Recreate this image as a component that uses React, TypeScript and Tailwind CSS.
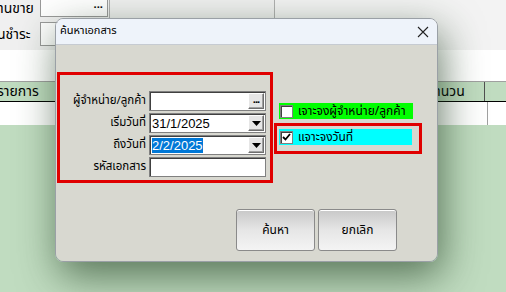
import React from "react";

const font = { fontFamily: 'Tahoma, "Noto Sans Thai", "Leelawadee UI", "Liberation Sans", sans-serif' };

function Btn3D({ children }: { children: React.ReactNode }) {
  return (
    <div className="w-[16px] h-[16px] flex items-center justify-center bg-[#e6e6e6] border border-t-white border-l-white border-r-[#6e6e6e] border-b-[#6e6e6e] shadow-[inset_-1px_-1px_0_#a0a0a0]">
      {children}
    </div>
  );
}

function Field({ children, btn }: { children?: React.ReactNode; btn?: "dots" | "arrow" }) {
  return (
    <div className="w-[117px] h-[20px] bg-white border border-[#808080] shadow-[inset_1px_1px_0_#404040] flex items-center pl-[2px] pr-[1px]">
      <div className="flex-1 text-[13px] leading-none text-black" style={{ fontFamily: '"Liberation Sans", Arial, sans-serif' }}>{children}</div>
      {btn === "dots" && (
        <Btn3D>
          <span className="text-[11px] leading-none font-bold tracking-[-1px] -mt-[4px]">...</span>
        </Btn3D>
      )}
      {btn === "arrow" && (
        <Btn3D>
          <svg width="9" height="5" viewBox="0 0 9 5"><path d="M0 0h9L4.5 5z" fill="#000" /></svg>
        </Btn3D>
      )}
    </div>
  );
}

export default function App() {
  return (
    <div className="relative w-[506px] h-[292px] overflow-hidden bg-[#c0dcc0] text-black" style={font}>
      {/* Background app */}
      <div className="flex flex-col">
        <div className="bg-[#f0f0f0] h-[50px] flex">
          <div className="w-[275px] flex flex-col">
            <div className="flex h-[18px]">
              <div className="w-[43px] text-[14px] leading-[17px] pl-[1px] -ml-[3px] whitespace-nowrap">านขาย</div>
              <div className="w-[68px] h-[17px] bg-white border border-[#9a9a9a] border-t-0 flex items-start justify-end pr-[4px]">
                <span className="text-[11px] leading-[10px] font-bold">...</span>
              </div>
              <div className="flex-1 h-[18px] border-l border-r border-[#b0b0b0] ml-[1px]" />
            </div>
            <div className="flex mt-[4px] h-[24px]">
              <div className="w-[43px] text-[14px] leading-[26px] -ml-[3px] whitespace-nowrap">นชำระ</div>
              <div className="flex-1 border border-[#9a9a9a] bg-white" />
            </div>
          </div>
          <div className="flex-1 bg-[#f3f3f3]" />
        </div>
        <div className="h-[31px] bg-white" />
        <div className="h-[21px] bg-[#c0dcc0] border-t border-[#a0a0a0] border-b border-b-black flex text-[14px]">
          <div className="w-[438px] leading-[19px] -ml-[3px]">รายการ</div>
          <div className="w-[50px] leading-[19px] border-r border-[#505050]">านวน</div>
          <div className="flex-1" />
        </div>
        <div className="h-[23px] bg-white flex">
          <div className="w-[488px] border-r border-[#a0a0a0]" />
        </div>
      </div>

      {/* Dialog */}
      <div className="absolute left-[55px] top-[18px] w-[383px] h-[244px] rounded-[8px] flex flex-col border border-[#9aa0a6] shadow-[4px_14px_40px_rgba(30,60,30,0.65)]">
        <div className="h-[26px] bg-[#eef3fa] rounded-t-[8px] flex items-center justify-between pl-[4px] pr-[8px] border-b border-[#c6cbd2]">
          <span className="text-[11px]">ค้นหาเอกสาร</span>
          <svg width="12" height="12" viewBox="0 0 12 12"><path d="M1 1L11 11M11 1L1 11" stroke="#222" strokeWidth="1.1" /></svg>
        </div>
        <div className="flex-1 bg-[#d8d8d0] rounded-b-[8px] flex flex-col">
          <div className="flex">
            <div className="ml-[1px] mt-[27px] w-[216px] h-[111px] border-[3px] border-[#e00000] pt-[16px] flex flex-col gap-[2px]">
              {[
                ["ผู้จำหน่าย/ลูกค้า", <Field btn="dots" />],
                ["เริ่มวันที่", <Field btn="arrow">31/1/2025</Field>],
                ["ถึงวันที่", <Field btn="arrow"><span className="bg-[#0078d7] text-white">2/2/2025</span></Field>],
                ["รหัสเอกสาร", <Field />],
              ].map(([label, field], i) => (
                <div key={i} className="flex items-center h-[20px]">
                  <div className="w-[89px] text-right pr-[3px] text-[11.5px]">{label}</div>
                  {field}
                </div>
              ))}
            </div>
            <div className="flex flex-col ml-[1px] mt-[58px]">
              <div className="ml-[5px] w-[134px] h-[16px] bg-[#00ff00] flex items-center">
                <div className="ml-[1px] w-[13px] h-[13px] bg-white border border-[#808080] shadow-[inset_1px_1px_0_#404040]" />
                <span className="ml-[5px] text-[12px] leading-none whitespace-nowrap">เจาะจงผู้จำหน่าย/ลูกค้า</span>
              </div>
              <div className="mt-[4px] w-[148px] h-[31px] border-[3px] border-[#e00000] pl-[2px] pt-[3px]">
                <div className="w-[133px] h-[16px] bg-[#00ffff] flex items-center">
                  <div className="ml-[1px] w-[13px] h-[13px] bg-white border border-[#808080] shadow-[inset_1px_1px_0_#404040] flex items-center justify-center">
                    <svg width="9" height="8" viewBox="0 0 9 8"><path d="M1 4l2.5 2.5L8 1" stroke="#000" strokeWidth="1.8" fill="none" /></svg>
                  </div>
                  <span className="ml-[5px] text-[12px] leading-none">แจาะจงวันที่</span>
                </div>
              </div>
            </div>
          </div>
          <div className="flex justify-end gap-[3px] pr-[40px] mt-[26px]">
            {["ค้นหา", "ยกเลิก"].map((t) => (
              <div key={t} className="w-[79px] h-[42px] rounded-[3px] border border-[#8a8a8a] bg-gradient-to-b from-[#c8c8c8] via-[#e6e6e6] to-[#f4f4f4] shadow-[inset_0_1px_0_#fff] flex items-center justify-center text-[12px]">
                {t}
              </div>
            ))}
          </div>
        </div>
      </div>
    </div>
  );
}
